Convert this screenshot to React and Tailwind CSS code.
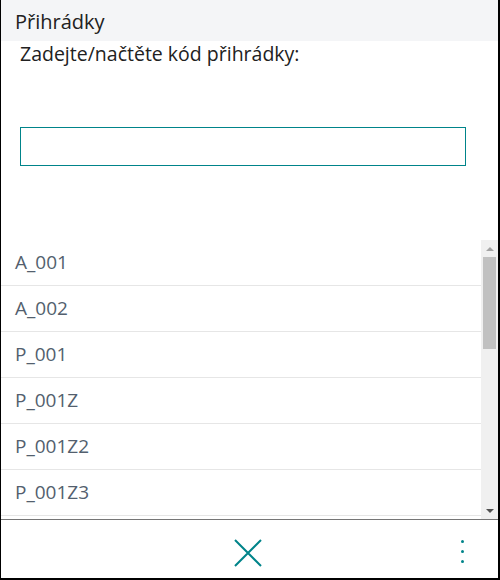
const bins = ["A_001", "A_002", "P_001", "P_001Z", "P_001Z2", "P_001Z3"];

export default function App() {
  return (
    <div
      className="flex h-[580px] w-[500px] flex-col border-b-2 border-l border-r-2 border-black bg-white"
      style={{ fontFamily: '"Open Sans", "Noto Sans", sans-serif' }}
    >
      {/* header */}
      <div className="flex h-[41px] shrink-0 items-center bg-[#f4f5f7] pl-[14px] pt-[3px] text-[20px] text-[#212121]">
        Přihrádky
      </div>
      <div className="shrink-0 pl-[19px] pt-0 text-[19.5px] leading-[26px] text-[#212121]">
        Zadejte/načtěte kód přihrádky:
      </div>

      <div className="shrink-0 pl-[19px] pt-[60px]">
        <input
          type="text"
          className="block h-[39px] w-[446px] border border-[#00848a] outline-none"
        />
      </div>

      {/* list + scrollbar */}
      <div className="mt-[74px] flex min-h-0 flex-1 overflow-hidden">
        <div className="flex-1 overflow-hidden">
          {bins.map((b) => (
            <div
              key={b}
              className="flex h-[46px] items-center border-b border-[#e6e6e6] pl-[14px] text-[19px] text-[#535f6e]"
            >
              {b}
            </div>
          ))}
        </div>
        <div className="flex w-[17px] shrink-0 flex-col items-center bg-[#f0f0f0]">
          <div className="flex h-[17px] w-full items-center justify-center">
            <div className="h-0 w-0 border-x-[4px] border-b-[4px] border-x-transparent border-b-[#a3a3a3]" />
          </div>
          <div className="h-[92px] w-[13px] bg-[#c1c1c1]" />
          <div className="flex-1" />
          <div className="flex h-[17px] w-full items-center justify-center">
            <div className="h-0 w-0 border-x-[4px] border-t-[4px] border-x-transparent border-t-[#505050]" />
          </div>
        </div>
      </div>

      {/* footer */}
      <div className="relative flex h-[59px] shrink-0 items-center justify-center border-t border-[#767676]">
        <svg width="28" height="28" viewBox="0 0 28 28" className="ml-[-3px] mt-[8px]">
          <path d="M1 1 L27 27 M27 1 L1 27" stroke="#00848a" strokeWidth="2" fill="none" />
        </svg>
        <div className="absolute right-[34px] top-[20px] flex flex-col gap-[7px]">
          <div className="h-[3px] w-[3px] rounded-full bg-[#00848a]" />
          <div className="h-[3px] w-[3px] rounded-full bg-[#00848a]" />
          <div className="h-[3px] w-[3px] rounded-full bg-[#00848a]" />
        </div>
      </div>
    </div>
  );
}
